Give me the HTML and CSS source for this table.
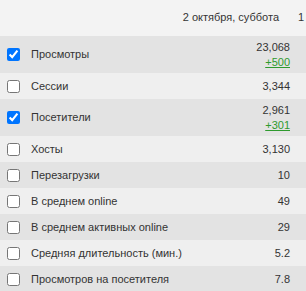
FILE: index.html
```html
<!DOCTYPE html>
<html lang="ru">
<head>
<meta charset="utf-8">
<link rel="stylesheet" href="styles.css">
</head>
<body>
<div class="table">
  <div class="head">
    <span class="date">2 октября, суббота</span>
    <span class="next">1</span>
  </div>
  <div class="row dark double">
    <label class="label"><input type="checkbox" checked><span>Просмотры</span></label>
    <div class="val"><div>23,068</div><a class="delta">+500</a></div>
  </div>
  <div class="row light">
    <label class="label"><input type="checkbox"><span>Сессии</span></label>
    <div class="val">3,344</div>
  </div>
  <div class="row dark double">
    <label class="label"><input type="checkbox" checked><span>Посетители</span></label>
    <div class="val"><div>2,961</div><a class="delta">+301</a></div>
  </div>
  <div class="row light">
    <label class="label"><input type="checkbox"><span>Хосты</span></label>
    <div class="val">3,130</div>
  </div>
  <div class="row dark">
    <label class="label"><input type="checkbox"><span>Перезагрузки</span></label>
    <div class="val">10</div>
  </div>
  <div class="row light">
    <label class="label"><input type="checkbox"><span>В среднем online</span></label>
    <div class="val">49</div>
  </div>
  <div class="row dark">
    <label class="label"><input type="checkbox"><span>В среднем активных online</span></label>
    <div class="val">29</div>
  </div>
  <div class="row light">
    <label class="label"><input type="checkbox"><span>Средняя длительность (мин.)</span></label>
    <div class="val">5.2</div>
  </div>
  <div class="row dark">
    <label class="label"><input type="checkbox"><span>Просмотров на посетителя</span></label>
    <div class="val">7.8</div>
  </div>
</div>
</body>
</html>
```
FILE: styles.css
```css
html, body {
  margin: 0;
  padding: 0;
  overflow: hidden;
  background: #ffffff;
}
.table {
  width: 306px;
  font-family: "Liberation Sans", Arial, sans-serif;
  font-size: 11px;
  color: #333333;
}
.head {
  height: 36px;
  background: #f3f3f3;
  display: flex;
  justify-content: flex-end;
  align-items: flex-start;
  padding-top: 11px;
  box-sizing: border-box;
  line-height: 13px;
}
.head .date {
  margin-right: 19px;
}
.head .next {
  width: 8px;
}
.row {
  display: flex;
  align-items: center;
  height: 26px;
  line-height: 13px;
}
.row.double {
  height: 37px;
}
.row.dark {
  background: #e3e3e3;
}
.row.light {
  background: #efefef;
}
.label {
  flex: 1;
  display: flex;
  align-items: center;
}
.label input {
  margin: 0 11px 0 7px;
  width: 13px;
  height: 13px;
}
.val {
  padding-right: 16px;
  text-align: right;
}
.delta {
  display: inline-block;
  margin-top: 2px;
  color: #2e9a2e;
  text-decoration: underline;
}
```
